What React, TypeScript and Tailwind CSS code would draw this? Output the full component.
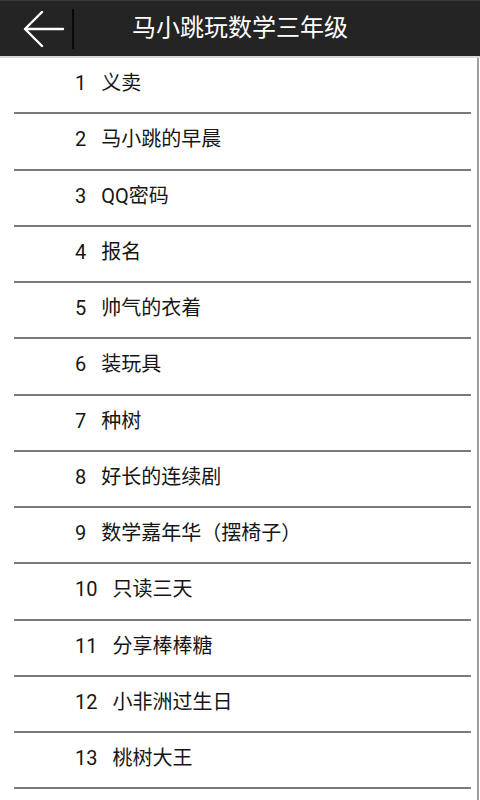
import React from "react";

const lessons = [
  "义卖",
  "马小跳的早晨",
  "QQ密码",
  "报名",
  "帅气的衣着",
  "装玩具",
  "种树",
  "好长的连续剧",
  "数学嘉年华（摆椅子）",
  "只读三天",
  "分享棒棒糖",
  "小非洲过生日",
  "桃树大王",
];

export default function App() {
  return (
    <div
      className="w-[480px] h-[800px] overflow-hidden bg-white flex flex-col"
      style={{ fontFamily: 'Roboto, "Noto Sans CJK SC", sans-serif' }}
    >
      {/* Title bar */}
      <header className="relative h-[56px] shrink-0 bg-[#242424] border-t border-[#3a3a3a] flex items-center">
        <div className="w-[72px] h-full flex items-center pl-[23px] pt-[4px]">
          <svg width="44" height="40" viewBox="0 0 44 40">
            <path
              d="M2 18 H40 M2 18 L19 1 M2 18 L19 35"
              stroke="#ffffff"
              strokeWidth="2.4"
              fill="none"
              strokeLinecap="round"
            />
          </svg>
        </div>
        <div className="w-[2px] h-[40px] bg-[#080808]" />
        <h1 className="absolute left-0 right-0 text-center text-[24px] leading-none text-white pointer-events-none pb-[2px]">
          马小跳玩数学三年级
        </h1>
      </header>
      <div className="h-[2px] shrink-0 bg-[#d8d8d8]" />

      {/* Lesson list */}
      <div className="flex-1 border-r-2 border-[#9c9c9c] mr-[1px] overflow-hidden">
        {lessons.map((name, i) => (
          <div key={i} className="h-[56.25px] flex flex-col">
            <div className="flex-1 flex items-center pl-[75px] pb-[4px] text-[20px] text-[#161616]">
              <span>{i + 1}</span>
              <span className="ml-[15px]">{name}</span>
            </div>
            <div className="h-[2px] ml-[14px] mr-[6px] bg-[#7a7a7a]" />
          </div>
        ))}
      </div>
    </div>
  );
}
